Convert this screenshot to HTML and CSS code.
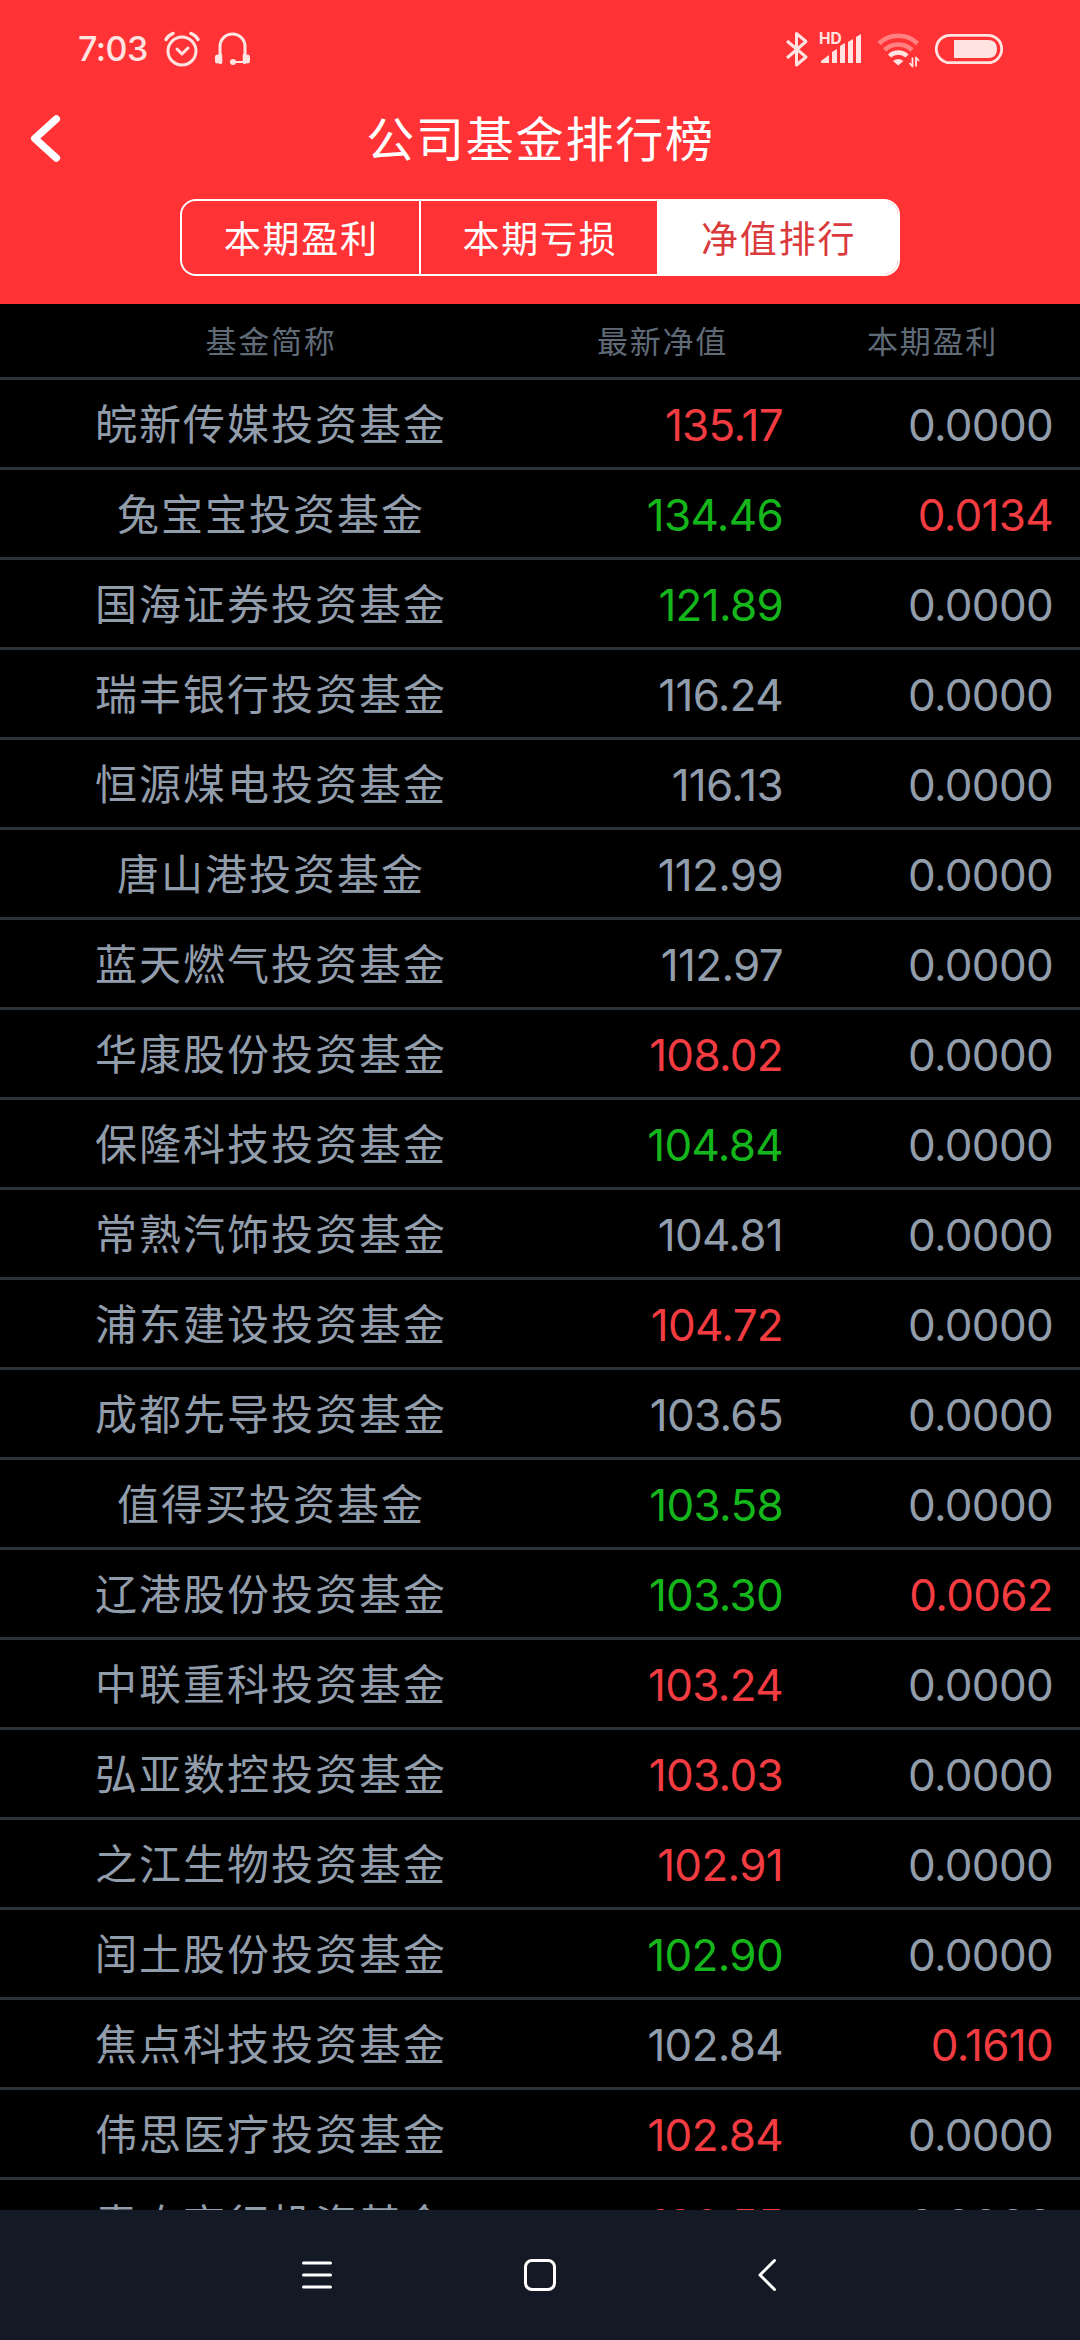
FILE: index.html
```html
<!DOCTYPE html>
<html lang="zh-CN">
<head>
<meta charset="utf-8">
<title>公司基金排行榜</title>
<link rel="stylesheet" href="styles.css">
</head>
<body>
<header class="header">
  <div class="status">
    <span class="time">7:03</span>
    <svg class="left-icons" width="90" height="40" viewBox="162 30 90 40" fill="none" stroke="#ffe4e2" stroke-width="3" stroke-linecap="round" stroke-linejoin="round">
      <circle cx="182" cy="51" r="14"/>
      <path d="M177 49l5 5 6-6"/>
      <path d="M166 39.500q2-4 7-6M198 39.500q-2-4-7-6" stroke-width="3.500"/>
      <path d="M220 56v-9.500a12.500 12.500 0 0 1 25 0V56"/>
      <path d="M217.500 57v4M247.500 57v4" stroke-width="5"/>
      <path d="M220.500 55v7.500M244.500 55v7.500" stroke-width="3.500"/>
      <path d="M233 62h11" stroke-width="2"/>
      <circle cx="233" cy="62" r="1.500"/>
    </svg>
    <svg class="right-icons" width="226" height="40" viewBox="782 30 226 40" fill="none" stroke="#ffe4e2" stroke-width="3" stroke-linejoin="round">
      <path d="M787 41l19 16-9.500 8V33.500l9.500 8-19 16.500"/>
      <text class="hd" x="819" y="44">HD</text>
      <g fill="#ffe4e2" stroke="none">
        <path d="M821 63v-2l8-6v8z"/>
        <path d="M832 63V52l5-3v14z"/>
        <path d="M840 63V46l5-3v20z"/>
        <path d="M848 63V42l5-3v24z"/>
        <path d="M856 63V37l5-3v29z"/>
      </g>
      <path d="M879 43.500a28 28 0 0 1 38.500 0" stroke="#ff8180" stroke-width="4.500"/>
      <path d="M884.500 50a20 20 0 0 1 27.500 0" stroke="#ff8180" stroke-width="4.500"/>
      <path d="M889.500 56a12.500 12.500 0 0 1 17.500 0" stroke-width="4.500"/>
      <path d="M893 61q5.200-4 10.400 0l-5.200 4.500z" fill="#ffe4e2" stroke="none"/>
      <path d="M912.500 57.500v9l-3-3.500M916 66.500v-9l3 3.500" stroke-width="1.800"/>
      <rect x="936.300" y="35.300" width="65.400" height="27.400" rx="13.700" stroke-width="2.800"/>
      <path d="M954 40h34q9 0 9 9t-9 9h-34z" fill="#ffe4e2" stroke="none"/>
    </svg>
  </div>
  <div class="titlebar">
    <svg class="back" width="34" height="52" viewBox="0 0 34 52" fill="none" stroke="#fff" stroke-width="7.500" stroke-linecap="round" stroke-linejoin="round"><path d="M28.300 7L6.800 26.500 28.300 46"/></svg>
    <h1 class="title">公司基金排行榜</h1>
  </div>
  <nav class="tabs">
    <span class="tab">本期盈利</span>
    <span class="tab">本期亏损</span>
    <span class="tab active">净值排行</span>
  </nav>
</header>
<main class="list">
  <div class="row head"><span>基金简称</span><span>最新净值</span><span>本期盈利</span></div>
  <div class="row"><span class="name">皖新传媒投资基金</span><span class="num up">135.17</span><span class="num">0.0000</span></div>
  <div class="row"><span class="name">兔宝宝投资基金</span><span class="num down">134.46</span><span class="num up">0.0134</span></div>
  <div class="row"><span class="name">国海证券投资基金</span><span class="num down">121.89</span><span class="num">0.0000</span></div>
  <div class="row"><span class="name">瑞丰银行投资基金</span><span class="num">116.24</span><span class="num">0.0000</span></div>
  <div class="row"><span class="name">恒源煤电投资基金</span><span class="num">116.13</span><span class="num">0.0000</span></div>
  <div class="row"><span class="name">唐山港投资基金</span><span class="num">112.99</span><span class="num">0.0000</span></div>
  <div class="row"><span class="name">蓝天燃气投资基金</span><span class="num">112.97</span><span class="num">0.0000</span></div>
  <div class="row"><span class="name">华康股份投资基金</span><span class="num up">108.02</span><span class="num">0.0000</span></div>
  <div class="row"><span class="name">保隆科技投资基金</span><span class="num down">104.84</span><span class="num">0.0000</span></div>
  <div class="row"><span class="name">常熟汽饰投资基金</span><span class="num">104.81</span><span class="num">0.0000</span></div>
  <div class="row"><span class="name">浦东建设投资基金</span><span class="num up">104.72</span><span class="num">0.0000</span></div>
  <div class="row"><span class="name">成都先导投资基金</span><span class="num">103.65</span><span class="num">0.0000</span></div>
  <div class="row"><span class="name">值得买投资基金</span><span class="num down">103.58</span><span class="num">0.0000</span></div>
  <div class="row"><span class="name">辽港股份投资基金</span><span class="num down">103.30</span><span class="num up">0.0062</span></div>
  <div class="row"><span class="name">中联重科投资基金</span><span class="num up">103.24</span><span class="num">0.0000</span></div>
  <div class="row"><span class="name">弘亚数控投资基金</span><span class="num up">103.03</span><span class="num">0.0000</span></div>
  <div class="row"><span class="name">之江生物投资基金</span><span class="num up">102.91</span><span class="num">0.0000</span></div>
  <div class="row"><span class="name">闰土股份投资基金</span><span class="num down">102.90</span><span class="num">0.0000</span></div>
  <div class="row"><span class="name">焦点科技投资基金</span><span class="num">102.84</span><span class="num up">0.1610</span></div>
  <div class="row"><span class="name">伟思医疗投资基金</span><span class="num up">102.84</span><span class="num">0.0000</span></div>
  <div class="row"><span class="name">青农商行投资基金</span><span class="num up">102.55</span><span class="num">0.0000</span></div>
</main>
<footer class="sysnav">
  <svg width="40" height="40" viewBox="0 0 40 40" stroke="#fff" stroke-width="3" stroke-linecap="round"><path d="M6.500 8h27M6.500 20h27M6.500 32h27"/></svg>
  <svg width="40" height="40" viewBox="0 0 40 40" fill="none" stroke="#fff" stroke-width="3"><rect x="5.500" y="5.500" width="29" height="29" rx="6.500"/></svg>
  <svg width="40" height="40" viewBox="0 0 40 40" fill="none" stroke="#fff" stroke-width="3" stroke-linecap="round" stroke-linejoin="round"><path d="M31.500 5.500L17 20l14.500 14.500"/></svg>
</footer>
</body>
</html>
```

FILE: styles.css
```css
* { box-sizing: border-box; }

body {
  margin: 0;
  width: 1080px;
  height: 2340px;
  overflow: hidden;
  display: flex;
  flex-direction: column;
  background: #000;
  color: #929dac;
  font-family: Inter, "Noto Sans CJK SC", sans-serif;
}

.header {
  height: 304px;
  flex: none;
  background: #ff3336;
  color: #fff;
}

.status {
  height: 100px;
  display: flex;
  align-items: center;
  padding: 0 72px 0 78px;
}

.time {
  width: 84px;
  margin-top: -2px;
  font-size: 34px;
  font-weight: 500;
  letter-spacing: -0.5px;
  line-height: 40px;
  color: #ffe4e2;
}

.right-icons { margin-left: auto; }

.hd {
  font: 700 15.500px Inter, sans-serif;
  fill: #ffe4e2;
  stroke: none;
}

.titlebar {
  height: 99px;
  display: grid;
  grid-template-columns: 120px 1fr 120px;
  align-items: start;
}

.back { margin: 12px 0 0 28px; }

.title {
  margin: 4px 0 0;
  text-align: center;
  font-size: 48px;
  font-weight: 400;
  line-height: 72px;
  letter-spacing: 1.800px;
  text-indent: 1px;
}

.tabs {
  width: 720px;
  height: 77px;
  margin: 0 auto;
  display: grid;
  grid-template-columns: repeat(3, 1fr);
  border: 2px solid #fff;
  border-radius: 16px;
  overflow: hidden;
}

.tab {
  text-align: center;
  font-size: 37px;
  line-height: 77px;
  letter-spacing: 1.800px;
}

.tab + .tab { box-shadow: -2px 0 0 #fff; }

.active {
  background: #fff;
  color: #db3a3d;
}

.list {
  height: 1906px;
  flex: none;
  overflow: hidden;
}

.row {
  height: 90px;
  display: grid;
  grid-template-columns: 540px 243px 243px;
  border-bottom: 3px solid #2b3238;
  line-height: 90px;
}

.row > :last-child { margin: 0 -27px 0 27px; }

.head {
  height: 76px;
  line-height: 75px;
  text-align: center;
  font-size: 31px;
  letter-spacing: 1.800px;
  text-indent: 2px;
  color: #606b78;
}

.name {
  text-align: center;
  font-size: 42px;
  letter-spacing: 2px;
  text-indent: 2px;
}

.num {
  text-align: right;
  font-size: 44px;
  letter-spacing: -0.700px;
}

.up { color: #f23c42; }
.down { color: #15b61b; }

.sysnav {
  height: 130px;
  flex: none;
  display: flex;
  justify-content: center;
  gap: 183px;
  padding-top: 45px;
  background: #141a25;
}
```
